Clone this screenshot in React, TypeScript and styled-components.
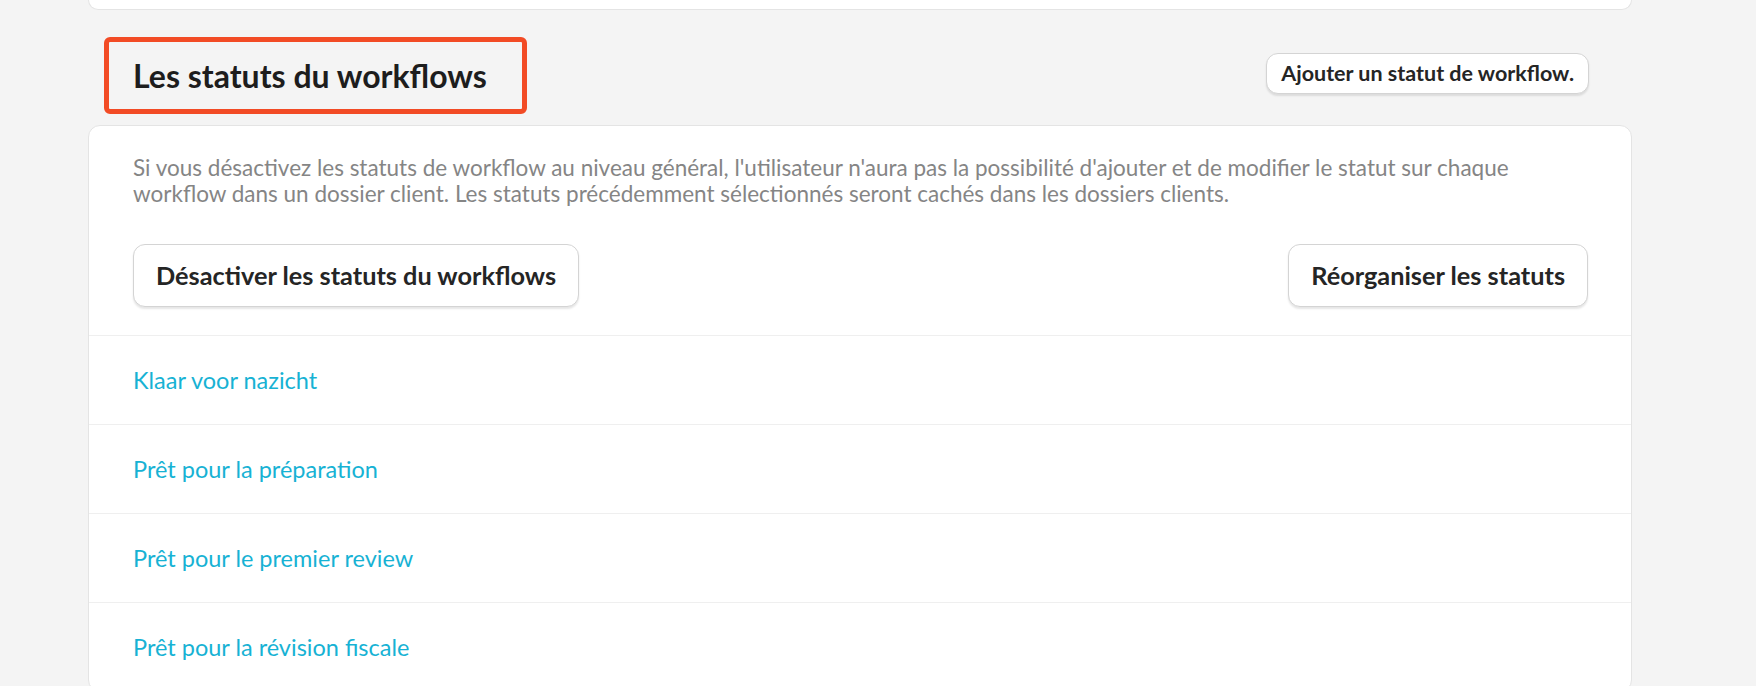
import React from "react";
import styled, { createGlobalStyle } from "styled-components";

const GlobalStyle = createGlobalStyle`
  html, body {
    margin: 0;
    padding: 0;
    background: #f4f4f4;
    font-family: Lato, "Open Sans", "Liberation Sans", sans-serif;
  }
  * { box-sizing: border-box; }
`;

const Page = styled.div`
  width: 1544px;
  margin-left: 88px;
  display: flex;
  flex-direction: column;
`;

const TopCard = styled.div`
  height: 10px;
  background: #ffffff;
  border: 1px solid #e4e4e4;
  border-top: none;
  border-radius: 0 0 12px 12px;
`;

const Header = styled.div`
  display: flex;
  justify-content: space-between;
  align-items: flex-start;
  padding: 27px 43px 11px 16px;
`;

const TitleFrame = styled.div`
  border: 5px solid #f24b25;
  border-radius: 6px;
  height: 77px;
  padding: 0 35px 0 24px;
  display: flex;
  align-items: center;
`;

const Title = styled.h2`
  margin: 0;
  font-size: 32px;
  font-weight: 700;
  color: #1d1d1d;
  letter-spacing: 0;
`;

const Button = styled.button<{ $size?: "sm" | "lg" }>`
  font-family: Lato, "Open Sans", "Liberation Sans", sans-serif;
  font-weight: 700;
  color: #252525;
  background: #ffffff;
  border: 1px solid #d4d4d4;
  border-radius: 12px;
  box-shadow: 0 2px 2px rgba(0, 0, 0, 0.1);
  cursor: pointer;
  white-space: nowrap;
  line-height: 1.2;
  font-size: ${(p) => (p.$size === "sm" ? "21.5px" : "25.3px")};
  height: ${(p) => (p.$size === "sm" ? "41px" : "63px")};
  padding: ${(p) => (p.$size === "sm" ? "0 14px" : "0 22px")};
`;

const AddButton = styled(Button)`
  margin-top: 16px;
`;

const Card = styled.section`
  background: #ffffff;
  border: 1px solid #e4e4e4;
  border-radius: 12px;
  display: flex;
  flex-direction: column;
`;

const Intro = styled.div`
  padding: 29px 43px 28px 44px;
  display: flex;
  flex-direction: column;
  gap: 37px;
`;

const Description = styled.p`
  margin: 0;
  font-size: 22.5px;
  line-height: 26px;
  color: #858585;
`;

const Actions = styled.div`
  display: flex;
  justify-content: space-between;
`;

const StatusRow = styled.div`
  height: 89px;
  border-top: 1px solid #efefef;
  display: flex;
  align-items: center;
  padding-left: 44px;
`;

const StatusLink = styled.a`
  font-size: 23.5px;
  color: #17b2d4;
  text-decoration: none;
  cursor: pointer;
`;

const statuses = [
  "Klaar voor nazicht",
  "Prêt pour la préparation",
  "Prêt pour le premier review",
  "Prêt pour la révision fiscale",
];

export default function App() {
  return (
    <>
      <GlobalStyle />
      <Page>
        <TopCard />
        <Header>
          <TitleFrame>
            <Title>Les statuts du workflows</Title>
          </TitleFrame>
          <AddButton $size="sm">Ajouter un statut de workflow.</AddButton>
        </Header>
        <Card>
          <Intro>
            <Description>
              Si vous désactivez les statuts de workflow au niveau général, l'utilisateur n'aura pas la
              possibilité d'ajouter et de modifier le statut sur chaque workflow dans un dossier client. Les
              statuts précédemment sélectionnés seront cachés dans les dossiers clients.
            </Description>
            <Actions>
              <Button $size="lg">Désactiver les statuts du workflows</Button>
              <Button $size="lg">Réorganiser les statuts</Button>
            </Actions>
          </Intro>
          {statuses.map((s) => (
            <StatusRow key={s}>
              <StatusLink>{s}</StatusLink>
            </StatusRow>
          ))}
        </Card>
      </Page>
    </>
  );
}
